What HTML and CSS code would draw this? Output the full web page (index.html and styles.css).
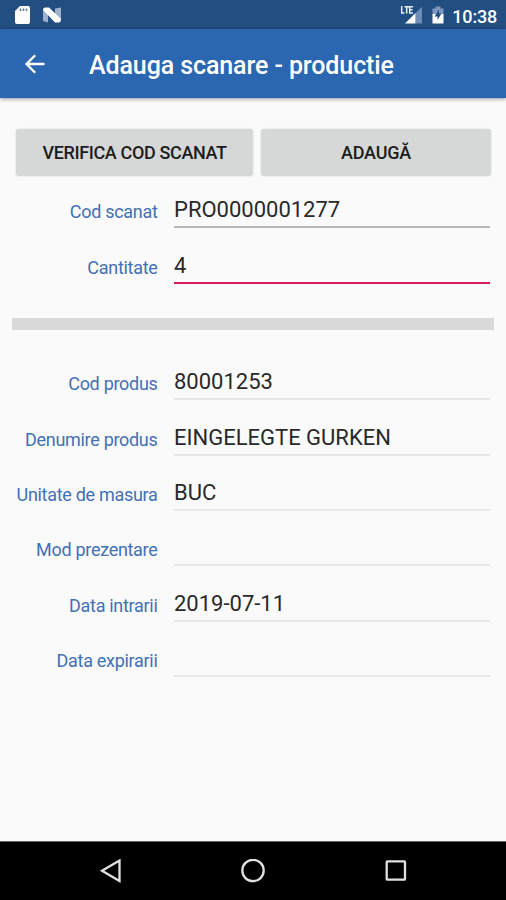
FILE: index.html
```html
<!DOCTYPE html>
<html lang="ro">
<head>
<meta charset="utf-8">
<title>Adauga scanare - productie</title>
<link rel="stylesheet" href="styles.css">
</head>
<body>
<div class="screen">
  <div class="status">
    <svg class="status-left" width="50" height="29" viewBox="0 0 50 29">
      <path fill="#fff" d="M6 6H14Q16 6 16 8V22Q16 24 14 24H3Q1 24 1 22V11Z"/>
      <path stroke="#59779f" stroke-width="1.5" d="M6.500 8.500V11M9.500 8.500V11M12.500 8.500V11"/>
      <path fill="#9fb1cc" d="M29 10L34 14V22.500L29 21ZM41 8.500L47 7.500V20L41 16Z"/>
      <path fill="#fff" d="M29 10Q29 7.500 31.500 7.500H35L47 19Q47 22.500 44.500 22.500H41Z"/>
    </svg>
    <div class="status-right">
      <svg width="48" height="29" viewBox="0 0 48 29">
        <path fill="none" stroke="#e6ecf4" stroke-width="1.500" d="M1.700 6V13H4.500M4.500 6.700H9M6.700 6.700V13.500M13 6.700H9.700V13H13M9.700 9.800H12.500"/>
        <path fill="#6f8db5" d="M22 7V23.500H15.500V13Z"/>
        <path fill="#fff" d="M5 23.500L15.500 13V23.500Z"/>
        <path fill="#7d96bb" d="M35.500 6.500H40.500V8.500H43.500V15H32.500V8.500H35.500Z"/>
        <path fill="#fff" d="M32.500 14H43.500V23.500H32.500Z"/>
        <path fill="#234e82" d="M39 9.500L34.500 16.500H37.500V20L41.500 13.500H39Z"/>
      </svg>
      <span class="clock">10:38</span>
    </div>
  </div>
  <header class="toolbar">
    <svg width="22" height="22" viewBox="0 0 22 22"><path fill="none" stroke="#fff" stroke-width="2.300" d="M20.500 11H3M11.200 2.200L2.500 11L11.200 19.800"/></svg>
    <h1 class="title">Adauga scanare - productie</h1>
  </header>
  <main class="content">
    <div class="actions">
      <button class="btn verify">VERIFICA COD SCANAT</button>
      <button class="btn add">ADAUGĂ</button>
    </div>
    <div class="rows">
      <div class="row"><span class="label">Cod scanat</span><span class="value editable">PRO0000001277</span></div>
      <div class="row"><span class="label">Cantitate</span><span class="value focused">4</span></div>
    </div>
    <div class="divider"></div>
    <div class="rows">
      <div class="row"><span class="label">Cod produs</span><span class="value">80001253</span></div>
      <div class="row"><span class="label">Denumire produs</span><span class="value">EINGELEGTE GURKEN</span></div>
      <div class="row"><span class="label">Unitate de masura</span><span class="value">BUC</span></div>
      <div class="row"><span class="label">Mod prezentare</span><span class="value"></span></div>
      <div class="row"><span class="label">Data intrarii</span><span class="value">2019-07-11</span></div>
      <div class="row"><span class="label">Data expirarii</span><span class="value"></span></div>
    </div>
  </main>
  <nav class="navbar">
    <svg width="24" height="24" viewBox="0 0 24 24"><path d="M21.500 1.500V22L4 11.700Z"/></svg>
    <svg width="24" height="24" viewBox="0 0 24 24"><circle cx="12" cy="11.500" r="10.700"/></svg>
    <svg width="24" height="24" viewBox="0 0 24 24"><rect x="2.700" y="2.300" width="18.300" height="18.300" rx=".7"/></svg>
  </nav>
</div>
</body>
</html>
```
FILE: styles.css
```css
* { box-sizing: border-box; }
body { margin: 0; font-family: Roboto, "Liberation Sans", sans-serif; background: #fafafa; }
.screen { width: 506px; height: 900px; display: flex; flex-direction: column; overflow: hidden; }
.status { height: 29px; flex: none; background: #234e82; display: flex; justify-content: space-between; padding: 0 9px 0 14px; }
.status svg { display: block; }
.status-right { display: flex; align-items: center; gap: 4px; }
.clock { color: #fff; font-size: 18px; letter-spacing: -.2px; font-weight: 500; line-height: 29px; padding-top: 3px; }
.toolbar { height: 69px; flex: none; background: #2b66b0; display: flex; align-items: center; padding: 1px 0 0 24px; box-shadow: 0 1px 4px rgba(0, 0, 0, .4); }
.title { margin: 4px 0 0 43px; color: #fff; font-size: 25px; letter-spacing: -.1px; font-weight: 500; line-height: 32px; white-space: nowrap; }
.content { flex: 1; }
.actions { display: flex; gap: 8px; padding: 31px 15px 0 16px; }
.btn { height: 47px; border: 0; border-radius: 3px; padding: 0; background: #d6d8d7; box-shadow: 0 0 2px rgba(0, 0, 0, .15); color: #1c1c1c; font-family: inherit; font-size: 18px; letter-spacing: -.36px; font-weight: 500; }
.verify { width: 237px; }
.add { flex: 1; letter-spacing: -.2px; }
.rows { padding: 0 16px 0 0; }
.actions + .rows { padding-top: 0; margin-top: -3px; }
.row { height: 55.4px; display: flex; align-items: flex-end; }
.label { width: 157.5px; padding-bottom: 1px; text-align: right; color: #4470b5; font-size: 18px; letter-spacing: -.3px; line-height: 30px; white-space: nowrap; }
.value { flex: 1; height: 34px; margin-left: 16.5px; border-bottom: 2px solid #e8e8e8; color: #292929; font-size: 22px; line-height: 32px; white-space: nowrap; }
.editable { border-bottom: 2px solid #b7b7b7; }
.focused { border-bottom: 2px solid #d81b60; }
.divider { height: 12px; margin: 34px 12px 15px; background: #dadada; }
.navbar { height: 59px; flex: none; background: #000; border-top: 1px solid #666; display: flex; justify-content: center; align-items: center; gap: 119px; }
.navbar svg { fill: none; stroke: #e0e0e0; stroke-width: 2.3; }
```
